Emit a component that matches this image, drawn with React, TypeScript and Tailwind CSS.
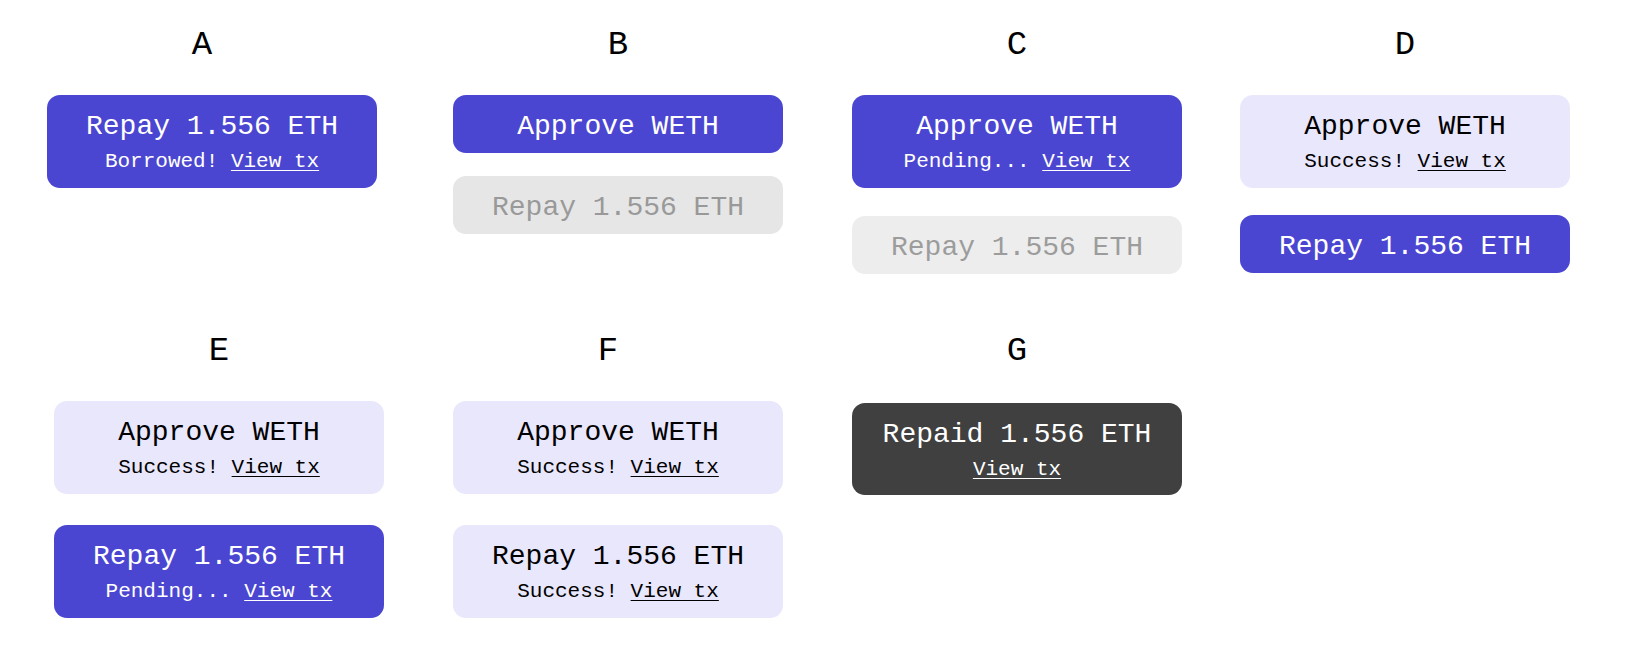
type Tone = "primary" | "done" | "disabled" | "disabledLight" | "dark";

const tones: Record<Tone, string> = {
  primary: "bg-[#4b46d1] text-white",
  done: "bg-[#e9e7fc] text-black",
  disabled: "bg-[#e6e6e6] text-[#999999]",
  disabledLight: "bg-[#ededed] text-[#9c9c9c]",
  dark: "bg-[#404040] text-white",
};

function TxButton({
  tone,
  label,
  status,
  link = true,
  className = "",
}: {
  tone: Tone;
  label: string;
  status?: string;
  link?: boolean;
  className?: string;
}) {
  const tall = status !== undefined;
  return (
    <div
      className={`w-[330px] rounded-[13px] flex flex-col items-center justify-center gap-[10px] ${
        tall ? "h-[93px] pt-[2px]" : "h-[58px] pt-[6px]"
      } ${tones[tone]} ${className}`}
    >
      <div className="text-[28px] leading-[28px] whitespace-pre">{label}</div>
      {tall && (
        <div className="text-[21px] leading-[21px] whitespace-pre">
          {status}
          {status && link ? " " : ""}
          {link && <span className="underline decoration-1 underline-offset-[3px]">View tx</span>}
        </div>
      )}
    </div>
  );
}

function Column({
  letter,
  shift = false,
  children,
  className = "",
}: {
  letter: string;
  shift?: boolean;
  children: React.ReactNode;
  className?: string;
}) {
  return (
    <div className={`w-[330px] shrink-0 flex flex-col ${className}`}>
      <div
        className={`h-[34px] text-[34px] leading-[34px] text-center text-black mb-[33px] ${
          shift ? "pr-[20px]" : ""
        }`}
      >
        {letter}
      </div>
      {children}
    </div>
  );
}

export default function App() {
  return (
    <main className="w-[1636px] h-[672px] bg-white overflow-hidden font-['Courier_New','Nimbus_Mono_PS','FreeMono','Liberation_Mono',monospace]">
      {/* row 1 */}
      <div className="flex items-start pt-[28px]">
        <Column letter="A" shift className="ml-[47px]">
          <TxButton tone="primary" label="Repay 1.556 ETH" status="Borrowed!" />
        </Column>
        <Column letter="B" className="ml-[76px]">
          <TxButton tone="primary" label="Approve WETH" />
          <TxButton tone="disabled" label="Repay 1.556 ETH" className="mt-[23px]" />
        </Column>
        <Column letter="C" className="ml-[69px]">
          <TxButton tone="primary" label="Approve WETH" status="Pending..." />
          <TxButton tone="disabledLight" label="Repay 1.556 ETH" className="mt-[28px]" />
        </Column>
        <Column letter="D" className="ml-[58px]">
          <TxButton tone="done" label="Approve WETH" status="Success!" />
          <TxButton tone="primary" label="Repay 1.556 ETH" className="mt-[27px]" />
        </Column>
      </div>

      {/* row 2 */}
      <div className="flex items-start mt-[60px]">
        <Column letter="E" className="ml-[54px]">
          <TxButton tone="done" label="Approve WETH" status="Success!" />
          <TxButton tone="primary" label="Repay 1.556 ETH" status="Pending..." className="mt-[31px]" />
        </Column>
        <Column letter="F" shift className="ml-[69px]">
          <TxButton tone="done" label="Approve WETH" status="Success!" />
          <TxButton tone="done" label="Repay 1.556 ETH" status="Success!" className="mt-[31px]" />
        </Column>
        <Column letter="G" className="ml-[69px]">
          <TxButton tone="dark" label="Repaid 1.556 ETH" status="" className="mt-[2px] !h-[92px]" />
        </Column>
      </div>
    </main>
  );
}
